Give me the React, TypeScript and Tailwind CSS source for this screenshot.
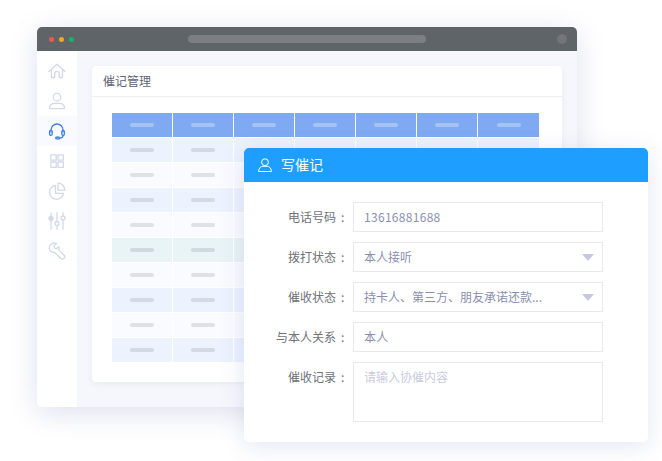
const rows = [
  { bg: 'bg-[#ecf2fe]', pill: 'bg-[#d5d9e6]' },
  { bg: 'bg-[#f9fbff]', pill: 'bg-[#dfe1e6]' },
  { bg: 'bg-[#ecf2fe]', pill: 'bg-[#d5d9e6]' },
  { bg: 'bg-[#f9fbff]', pill: 'bg-[#dfe1e6]' },
  { bg: 'bg-[#e9f4f6]', pill: 'bg-[#d0d9de]' },
  { bg: 'bg-[#f9fbff]', pill: 'bg-[#dfe1e6]' },
  { bg: 'bg-[#ecf2fe]', pill: 'bg-[#d5d9e6]' },
  { bg: 'bg-[#f9fbff]', pill: 'bg-[#dfe1e6]' },
  { bg: 'bg-[#ecf2fe]', pill: 'bg-[#d5d9e6]' },
];

const cols = [0, 1, 2, 3, 4, 5, 6];

function NavIcon({ children, active }: { children: React.ReactNode; active?: boolean }) {
  return (
    <div className={`flex h-[30px] items-center justify-center ${active ? 'bg-[#f8faff]' : ''}`}>
      <svg
        viewBox="0 0 18 18"
        fill="none"
        stroke={active ? '#3f7fe8' : '#d3d9e8'}
        strokeWidth="1.3"
        strokeLinecap="round"
        strokeLinejoin="round"
        className="h-[18px] w-[18px]"
      >
        {children}
      </svg>
    </div>
  );
}

function Sidebar() {
  return (
    <div className="w-[40px] shrink-0 rounded-bl-[5px] bg-white pt-[5px]">
      <NavIcon>
        <path d="M1 9.5 9 2.2l8 7.3" />
        <path d="M3.5 8v7.5h3.2v-3.8a2.3 2.3 0 0 1 4.6 0v3.8h3.2V8" />
      </NavIcon>
      <NavIcon>
        <circle cx="9" cy="5.2" r="3.8" />
        <path d="M1.5 16.6v-1c0-2.6 2.6-4.2 4.6-4.2h5.8c2 0 4.6 1.6 4.6 4.2v1z" />
      </NavIcon>
      <NavIcon active>
        <path d="M3 10V8a6 6 0 0 1 12 0v2" />
        <rect x="1.6" y="8.4" width="2.6" height="5" rx="1.3" />
        <rect x="13.8" y="8.4" width="2.6" height="5" rx="1.3" />
        <path d="M15 13.4c0 1.6-1.8 2.6-3.6 2.6" />
        <ellipse cx="9.6" cy="16" rx="2" ry="1" />
      </NavIcon>
      <NavIcon>
        <rect x="2.8" y="2.8" width="5.4" height="5.4" />
        <rect x="10" y="2.8" width="5.4" height="5.4" />
        <rect x="2.8" y="10" width="5.4" height="5.4" />
        <rect x="10" y="10" width="5.4" height="5.4" />
      </NavIcon>
      <NavIcon>
        <path d="M7.5 3.4a7 7 0 1 0 8 8H7.5z" />
        <path d="M10 1.2a7 7 0 0 1 6.8 7H10z" />
      </NavIcon>
      <NavIcon>
        <path d="M3 .8v16.4M9 .8v16.4M15 .8v16.4" />
        <circle cx="3" cy="6.5" r="2" fill="#d3d9e8" />
        <circle cx="9" cy="11.5" r="2" fill="white" />
        <circle cx="15" cy="6" r="2" fill="white" />
      </NavIcon>
      <NavIcon>
        <path d="M8.6 1.5A5.2 5.2 0 0 0 1.5 7.6 5.2 5.2 0 0 0 7 10.6l5.7 5.6c1 1 2.5 1 3.4.1.9-.9.9-2.3-.1-3.3l-5.4-5.4a5.2 5.2 0 0 0 .3-3l-2.6 2.2-1.8-.8-.5-2.2z" />
      </NavIcon>
    </div>
  );
}

function TableCard() {
  return (
    <div className="rounded-[4px] bg-white shadow-[0_2px_6px_rgba(90,100,170,0.08)]">
      <div className="h-[31px] border-b border-[#eff0f5] pl-[11px] text-[12px] leading-[30px] text-[#5f6475]">
        催记管理
      </div>
      <div className="flex flex-col gap-px pt-[16px] pr-[23px] pb-[20px] pl-[20px]">
        <div className="flex gap-px">
          {cols.map((c) => (
            <div key={c} className="flex h-[24px] w-[60px] items-center justify-center bg-[#7fa9f1] last:w-[61px]">
              <div className="h-[4px] w-[24px] rounded-full bg-[#a6c3f6]" />
            </div>
          ))}
        </div>
        {rows.map((r, i) => (
          <div key={i} className="flex gap-px">
            {cols.map((c) => (
              <div key={c} className={`flex h-[24px] w-[60px] items-center justify-center last:w-[61px] ${r.bg}`}>
                <div className={`h-[4px] w-[24px] rounded-full ${r.pill}`} />
              </div>
            ))}
          </div>
        ))}
      </div>
    </div>
  );
}

function Label({ text }: { text: string }) {
  return (
    <div className="flex shrink-0 text-[12px] text-[#6e7278]">
      <span className="w-[92px] text-right">{text}</span>
      <span className="w-[17px] pl-[5px]">:</span>
    </div>
  );
}

function Field({ label, value, select }: { label: string; value: string; select?: boolean }) {
  return (
    <div className="flex items-center">
      <Label text={label} />
      <div className="flex h-[30px] w-[250px] items-center justify-between border border-[#e8e8f5] pr-[8px] pl-[10px] text-[12px] text-[#8a8fb0]">
        <span className={select ? '' : 'tracking-[0.3px]'}>{value}</span>
        {select && (
          <div className="h-0 w-0 border-x-[6px] border-t-[7px] border-x-transparent border-t-[#c5c8e0]" />
        )}
      </div>
    </div>
  );
}

function NoteDialog() {
  return (
    <div className="absolute top-[148px] left-[244px] w-[404px] rounded-[5px] bg-white shadow-[0_4px_24px_rgba(90,100,170,0.16)]">
      <div className="flex h-[34px] items-center rounded-t-[5px] bg-[#1e9fff] pl-[14px] text-white">
        <svg
          viewBox="0 0 14 14"
          fill="none"
          stroke="white"
          strokeWidth="1"
          strokeLinejoin="round"
          className="h-[14px] w-[14px]"
        >
          <circle cx="7" cy="4.2" r="3.4" />
          <path d="M.6 13.5c0-3.6 2.6-5.2 4.2-5.2h4.4c1.6 0 4.2 1.6 4.2 5.2z" />
        </svg>
        <span className="ml-[9px] pb-[2px] text-[14px]">写催记</span>
      </div>
      <div className="flex flex-col gap-[10px] pt-[20px] pb-[20px]">
        <Field label="电话号码" value="13616881688" />
        <Field label="拨打状态" value="本人接听" select />
        <Field label="催收状态" value="持卡人、第三方、朋友承诺还款..." select />
        <Field label="与本人关系" value="本人" />
        <div className="flex items-start">
          <div className="pt-[6px]">
            <Label text="催收记录" />
          </div>
          <div className="h-[60px] w-[250px] border border-[#e8e8f5] pt-[5px] pl-[10px] text-[12px] text-[#c9cbe0]">
            请输入协催内容
          </div>
        </div>
      </div>
    </div>
  );
}

export default function App() {
  return (
    <div
      className="relative h-[461px] w-[662px] overflow-hidden bg-white pt-[27px] pl-[37px]"
      style={{ fontFamily: '"Noto Sans CJK SC", "Noto Sans", sans-serif' }}
    >
      <div className="flex h-[380px] w-[540px] flex-col rounded-[5px] shadow-[0_6px_28px_rgba(90,100,170,0.2)]">
        <div className="flex h-[24px] shrink-0 items-center rounded-t-[5px] bg-[#5f6468] pr-[10px] pl-[12px]">
          <div className="flex gap-[5px]">
            <div className="h-[5px] w-[5px] rounded-full bg-[#f0594a]" />
            <div className="h-[5px] w-[5px] rounded-full bg-[#f5a623]" />
            <div className="h-[5px] w-[5px] rounded-full bg-[#16b364]" />
          </div>
          <div className="ml-[114px] h-[8px] w-[238px] rounded-full bg-[#7b7f83]" />
          <div className="ml-auto h-[10px] w-[10px] rounded-full bg-[#727679]" />
        </div>
        <div className="flex flex-1">
          <Sidebar />
          <div className="flex-1 rounded-br-[5px] bg-[#f6f7fc] pt-[15px] pr-[15px] pl-[15px]">
            <TableCard />
          </div>
        </div>
      </div>
      <NoteDialog />
    </div>
  );
}
